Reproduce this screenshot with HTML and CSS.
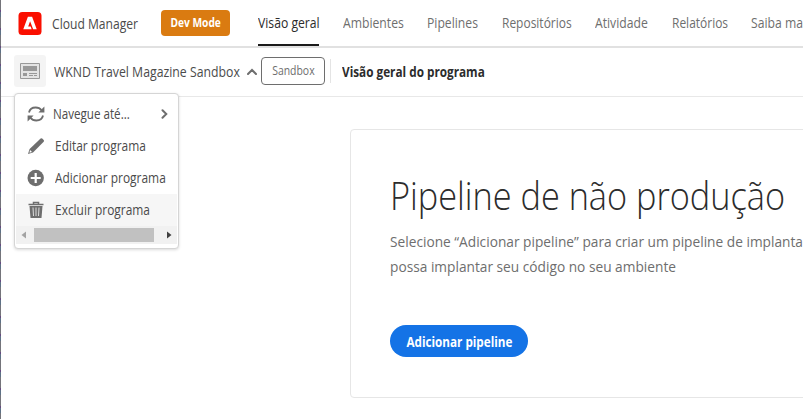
FILE: index.html
```html
<!DOCTYPE html>
<html lang="pt-BR">
<head>
<meta charset="utf-8">
<title>Cloud Manager</title>
<link rel="stylesheet" href="styles.css">
</head>
<body>
<div class="app">
  <header class="topbar">
    <svg class="logo" viewBox="0 0 24 24"><rect width="24" height="24" rx="4" fill="#fa0f00"/><path d="M9.800 5h4.400L19 18h-3.700l-3.200-8.400-2 5.400h2.600l1 3H5z" fill="#fff"/></svg>
    <span class="brand"><span class="f">Cloud Manager</span></span>
    <span class="dev"><span class="f">Dev Mode</span></span>
    <nav class="tabs">
      <a class="tab active t1"><span class="f">Visão geral</span></a>
      <a class="tab t2"><span class="f">Ambientes</span></a>
      <a class="tab t3"><span class="f">Pipelines</span></a>
      <a class="tab t4"><span class="f">Repositórios</span></a>
      <a class="tab t5"><span class="f">Atividade</span></a>
      <a class="tab t6"><span class="f">Relatórios</span></a>
      <a class="tab t7"><span class="f">Saiba ma</span></a>
    </nav>
  </header>
  <div class="subbar">
    <span class="thumb"><svg width="20" height="16" viewBox="0 0 20 16"><path fill="#e4e4e4" stroke="#999" d="M.5.5h19v15H.5z"/><path fill="#999" d="M3 3h14v5H3zM3 10h4v3H3zM9 10h8v1H9zM9 12h4v1H9zM14 12h3v1h-3z"/></svg></span>
    <span class="program"><span class="f">WKND Travel Magazine Sandbox</span></span>
    <svg class="caret" width="10" height="7" viewBox="0 0 10 7"><path d="M1 6l4-4 4 4" fill="none" stroke="#6e6e6e" stroke-width="2" stroke-linecap="round"/></svg>
    <span class="badge"><span class="f">Sandbox</span></span>
    <span class="rule"></span>
    <span class="crumb"><span class="f">Visão geral do programa</span></span>
  </div>
  <main class="main">
    <section class="card">
      <h1 class="title"><span class="f">Pipeline de não produção</span></h1>
      <p class="desc"><span class="f">Selecione “Adicionar pipeline” para criar um pipeline de implanta<br>possa implantar seu código no seu ambiente</span></p>
      <button class="cta"><span class="f">Adicionar pipeline</span></button>
    </section>
  </main>
  <div class="menu">
    <div class="item">
      <svg width="18" height="18" viewBox="0 0 18 18"><path d="M2 7.500C2.600 4.500 5.300 2.500 8.700 2.500c2.500 0 4.500 1 5.800 2.800M16 10.500c-.6 3-3.300 5-6.700 5-2.500 0-4.500-1-5.800-2.800" fill="none" stroke="#6e6e6e" stroke-width="1.800"/><path d="M17.400 1.500v6h-6zM.6 16.500v-6h6z" fill="#6e6e6e"/></svg>
      <span class="m1"><span class="f">Navegue até...</span></span>
      <svg class="chev" width="7" height="10" viewBox="0 0 7 10"><path d="M1.500 1.200L5.300 5 1.500 8.800" fill="none" stroke="#6e6e6e" stroke-width="2" stroke-linecap="round"/></svg>
    </div>
    <div class="item">
      <svg width="18" height="18" viewBox="0 0 18 18"><path d="M13.600 1.600q.8-.7 1.600 0l1.500 1.500q.7.800 0 1.600L6 15.400 1 17l1.600-5z" fill="#6e6e6e"/><path d="M3 13l2 2-2.500.7z" fill="#fff"/></svg>
      <span class="label"><span class="f">Editar programa</span></span>
    </div>
    <div class="item">
      <svg width="18" height="18" viewBox="0 0 18 18"><circle cx="8.700" cy="9" r="8.200" fill="#6e6e6e"/><path d="M8.700 4v10M3.700 9h10" stroke="#fff" stroke-width="2.200"/></svg>
      <span class="label"><span class="f">Adicionar programa</span></span>
    </div>
    <div class="item hover">
      <svg width="18" height="18" viewBox="0 0 18 18"><path d="M6.500 3V1.500h5V3M1.500 3.500h15" fill="none" stroke="#6e6e6e" stroke-width="1.500"/><path d="M2.500 5h13l-1 12h-11z" fill="#6e6e6e"/><path d="M6 6.500l.5 8.500M9 6.500V15M12 6.500l-.5 8.500" stroke="#ddd"/></svg>
      <span class="label"><span class="f">Excluir programa</span></span>
    </div>
    <div class="scroll">
      <svg width="5" height="8" viewBox="0 0 5 8"><path d="M5 .5v7L.5 4z" fill="#a3a3a3"/></svg>
      <span class="bar"></span>
      <svg width="5" height="8" viewBox="0 0 5 8"><path d="M0 .5v7L4.500 4z" fill="#404040"/></svg>
    </div>
  </div>
</div>
</body>
</html>
```

FILE: styles.css
```css
* { box-sizing: border-box; }
body { margin: 0; background: #fff; overflow: hidden; }
.app {
  position: relative; width: 803px; height: 419px; overflow: hidden; padding-left: 1px;
  font-family: "Open Sans", "Noto Sans", sans-serif; color: #4b4b4b; font-size: 14px;
  background: repeating-linear-gradient(#74747a 0 10px, #654a80 10px 12px, #5d7186 12px 17px, #74747a 17px 18px) 0 0 / 1px 100% no-repeat #fff;
}
/* Narrows the letterforms without changing their height. */
.f { display: inline-block; white-space: nowrap; transform: scaleX(.87); transform-origin: 0 50%; }
.topbar { height: 48px; display: flex; align-items: center; border-bottom: 2px solid #e1e1e1; padding-left: 17px; }
.logo { width: 24px; height: 23px; flex: none; }
.brand { width: 109px; margin-left: 10px; flex: none; }
.brand .f { transform: scaleX(.865); }
.dev { width: 69px; height: 26px; flex: none; border-radius: 4px; background: #da7b11; color: #fff; font-size: 12px; font-weight: 700; line-height: 26px; display: flex; justify-content: center; }
.dev .f, .badge .f, .cta .f { transform-origin: 50% 50%; }
.dev .f { transform: scaleX(.85); }
.tabs { display: flex; margin-left: 28px; gap: 23px; height: 46px; }
.tab { flex: none; line-height: 46px; color: #6e6e6e; }
.tab.active { color: #2c2c2c; border-bottom: 2px solid #1b1b1b; }
.t1 { width: 61px; } .t2 { width: 61px; margin-left: 1px; } .t3 { width: 51px; } .t4 { width: 70px; margin-left: 1px; }
.t4 .f { transform: scaleX(.855); }
.t5 { width: 54px; } .t6 { width: 56px; }
.t6 .f { transform: scaleX(.855); }
.subbar { height: 49px; display: flex; align-items: center; border-bottom: 1px solid #e8e8e8; padding: 0 0 2px 13px; }
.thumb { width: 32px; height: 32px; flex: none; border-radius: 3px; background: #f4f4f4; display: flex; align-items: center; justify-content: center; }
.program { width: 193px; margin-left: 8px; flex: none; }
.program .f { transform: scaleX(.877); }
.caret, .badge { flex: none; }
.badge { width: 64px; height: 28px; margin-left: 4px; border: 1px solid #6e6e6e; border-radius: 4px; font-size: 12px; line-height: 26px; display: flex; justify-content: center; color: #6e6e6e; }
.rule { width: 1px; height: 24px; margin: 0 11px 0 5px; background: #e4e4e4; }
.crumb { font-weight: 700; color: #2c2c2c; padding-top: 1px; }
.crumb .f { transform: scaleX(.84); }
.main { padding: 32px 0 0 349px; }
.card { width: 520px; height: 269px; border: 1px solid #e6e6e6; border-radius: 4px; padding: 40px 0 0 39px; }
.title { margin: 0; font-size: 38px; line-height: 50px; font-weight: 300; color: #2c2c2c; }
.title .f { transform: scaleX(.902); }
.desc { margin: 9px 0 46px; font-size: 15px; line-height: 25px; color: #6e6e6e; }
.desc .f { transform: scaleX(.914); display: block; width: max-content; }
.cta { width: 138px; height: 32px; padding: 0; border: 0; border-radius: 16px; background: #1473e6; color: #fff; font: 700 14px "Open Sans", sans-serif; display: flex; align-items: center; justify-content: center; }
.cta .f { transform: scaleX(.835); }
.menu { position: absolute; left: 14px; top: 93px; width: 165px; height: 156px; border: 1px solid #d5d5d5; border-radius: 4px; background: #fff; padding: 4px 1px 0; box-shadow: 0 1px 3px rgba(0,0,0,.15); }
.item { height: 32px; display: flex; align-items: center; padding-left: 11px; }
.item svg { flex: none; }
.label { margin: -1px 0 0 10px; }
.item .f { transform: scaleX(.853); }
.m1 { margin: -1px 0 0 8px; width: 108px; flex: none; }
.m1 .f { transform: scaleX(.83); }
.hover { background: #f6f6f6; }
.scroll { height: 18px; display: flex; align-items: center; background: #f1f1f1; padding-left: 5px; }
.bar { width: 120px; height: 14px; margin: 0 13px 0 8px; background: #c1c1c1; }
```
